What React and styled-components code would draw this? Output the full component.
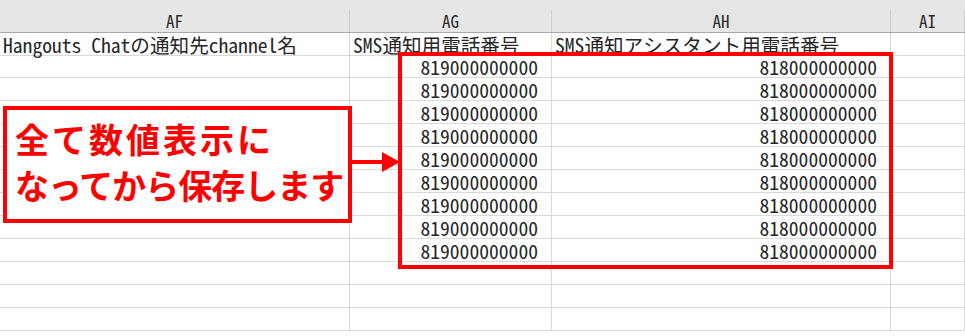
import React from "react";
import styled, { createGlobalStyle } from "styled-components";

const GlobalStyle = createGlobalStyle`
    html, body {
        margin: 0;
        padding: 0;
        background: #ffffff;
        overflow: hidden;
    }
`;

const CELL_FONT = `"Noto Sans Mono CJK JP", "Liberation Mono", "Noto Sans CJK JP", monospace`;
const COLUMNS = "350px 202px 339px 1fr";

const Sheet = styled.div`
    position: relative;
    width: 965px;
    height: 336px;
    overflow: hidden;
    background: #ffffff;
    font-family: ${CELL_FONT};
    color: #262626;
`;

const TopStrip = styled.div`
    height: 10px;
    background: #e6e6e6;
`;

const HeaderRow = styled.div`
    display: grid;
    grid-template-columns: ${COLUMNS};
    height: 23px;
    box-sizing: border-box;
    background: #e6e6e6;
    border-bottom: 1px solid #a9a9a9;
`;

const HeaderCell = styled.div`
    display: flex;
    align-items: center;
    justify-content: center;
    box-sizing: border-box;
    border-right: 1px solid #cfcfcf;
    font-size: 17px;
    line-height: 20px;
    color: #2b2b2b;
`;

const Row = styled.div`
    display: grid;
    grid-template-columns: ${COLUMNS};
    height: ${props => props.h}px;
    box-sizing: border-box;
    border-bottom: 1px solid #d9d9d9;
`;

const Cell = styled.div`
    display: flex;
    align-items: flex-end;
    justify-content: ${props => (props.num ? "flex-end" : "flex-start")};
    padding: ${props => (props.num ? "0 13px 0 0" : "0 0 0 3px")};
    box-sizing: border-box;
    border-right: 1px solid #d9d9d9;
    font-size: 19.6px;
    line-height: 21px;
    white-space: nowrap;
`;

const Highlight = styled.div`
    position: absolute;
    left: 398px;
    top: 52px;
    width: 495px;
    height: 217px;
    box-sizing: border-box;
    border: 4px solid #ff0000;
`;

const Callout = styled.div`
    position: absolute;
    left: 3px;
    top: 106px;
    width: 349px;
    height: 117px;
    box-sizing: border-box;
    border: 4px solid #ff0000;
    background: #ffffff;
    padding: 6px 0 0 8px;
    display: flex;
    flex-direction: column;
    font-family: "Noto Sans CJK JP", "Noto Sans", sans-serif;
    font-weight: 700;
    font-size: 34px;
    line-height: 46px;
    color: #ff0000;
    white-space: nowrap;
`;

const CalloutLine = styled.span`
    letter-spacing: ${props => props.spacing}px;
`;

const Arrow = styled.svg`
    position: absolute;
    left: 352px;
    top: 150px;
`;

const rows = [
    { h: 23, cells: ["Hangouts Chatの通知先channel名", "SMS通知用電話番号", "SMS通知アシスタント用電話番号"] },
    ...Array.from({ length: 9 }, (_, i) => ({ h: i === 0 ? 22 : 23, nums: true })),
    { h: 23 },
    { h: 23 },
    { h: 23 },
];

const App = () => {
    return (
        <Sheet>
            <GlobalStyle />
            <TopStrip />
            <HeaderRow>
                {["AF", "AG", "AH", "AI"].map(c => (
                    <HeaderCell key={c}>{c}</HeaderCell>
                ))}
            </HeaderRow>
            {rows.map((r, i) => (
                <Row key={i} h={r.h}>
                    <Cell>{r.cells ? r.cells[0] : ""}</Cell>
                    <Cell num={r.nums}>{r.cells ? r.cells[1] : r.nums ? "819000000000" : ""}</Cell>
                    <Cell num={r.nums}>{r.cells ? r.cells[2] : r.nums ? "818000000000" : ""}</Cell>
                    <Cell />
                </Row>
            ))}
            <Highlight />
            <Callout>
                <CalloutLine spacing={3}>全て数値表示に</CalloutLine>
                <CalloutLine spacing={-1}>なってから保存します</CalloutLine>
            </Callout>
            <Arrow width="48" height="24" viewBox="0 0 48 24">
                <line x1="0" y1="12" x2="32" y2="12" stroke="#ff0000" strokeWidth="4" />
                <polygon points="30,2 48,12 30,22" fill="#ff0000" />
            </Arrow>
        </Sheet>
    );
};

export default App;
